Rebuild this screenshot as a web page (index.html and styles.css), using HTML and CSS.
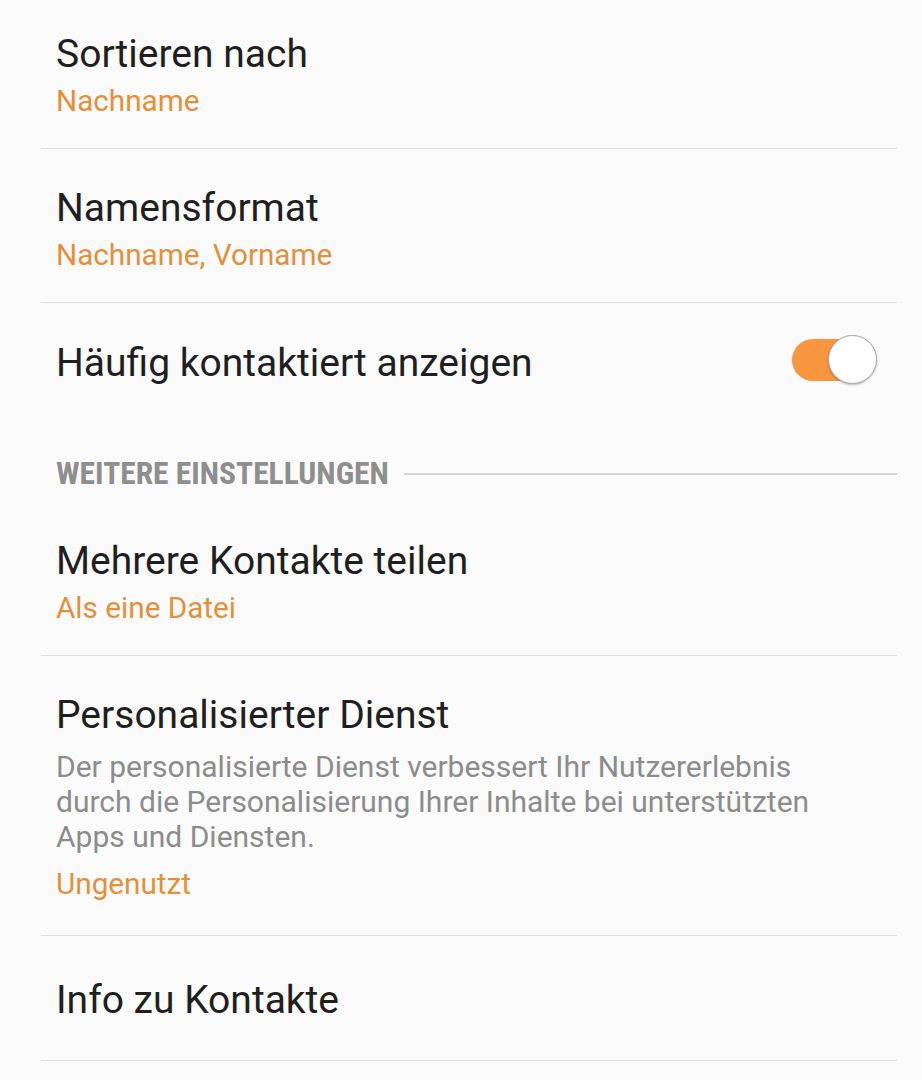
FILE: index.html
```html
<html>

<head>
  <link rel="stylesheet" href="styles.css">
</head>

<body>
  <div class="list">
    <div class="item">
      <div class="title">Sortieren nach</div>
      <div class="value">Nachname</div>
    </div>

    <div class="item">
      <div class="title">Namensformat</div>
      <div class="value">Nachname, Vorname</div>
    </div>

    <!-- switch row, no divider below -->
    <div class="item item-switch">
      <div class="title">Häufig kontaktiert anzeigen</div>
      <div class="switch on"><span class="knob"></span></div>
    </div>

    <div class="section">
      <span class="section-label">WEITERE EINSTELLUNGEN</span>
      <span class="section-line"></span>
    </div>

    <div class="item">
      <div class="title">Mehrere Kontakte teilen</div>
      <div class="value">Als eine Datei</div>
    </div>

    <div class="item item-long">
      <div class="title">Personalisierter Dienst</div>
      <div class="desc">Der personalisierte Dienst verbessert Ihr Nutzererlebnis durch die Personalisierung Ihrer Inhalte bei unterstützten Apps und Diensten.</div>
      <div class="value value-after-desc">Ungenutzt</div>
    </div>

    <div class="item item-single">
      <div class="title">Info zu Kontakte</div>
    </div>
  </div>
</body>

</html>
```

FILE: styles.css
```css
body {
  margin: 0;
  background-color: #fafafa;
  font-family: Roboto, "Noto Sans", sans-serif;
  overflow: hidden;
}

.list {
  margin: -5px 25px 0 41px;
}

.item {
  padding: 36px 15px 29px 15px;
  border-bottom: 1px solid #dedede;
}

.title {
  font-size: 39px;
  line-height: 46px;
  color: #1f1f1f;
}

.value {
  margin-top: 6px;
  font-size: 29.7px;
  line-height: 36px;
  color: #e0913e;
}

.desc {
  margin-top: 11px;
  max-width: 780px;
  font-size: 30px;
  line-height: 35px;
  color: #8c8c8c;
}

.value-after-desc {
  margin-top: 12px;
}

.item-long {
  padding-bottom: 33px;
}

.item-single {
  padding-top: 41px;
  padding-bottom: 37px;
}

.item-switch {
  display: flex;
  align-items: center;
  justify-content: space-between;
  padding-bottom: 36px;
  padding-right: 29px;
  border-bottom: none;
}

/* toggle */
.switch {
  position: relative;
  width: 76px;
  height: 42px;
  margin-bottom: 6px;
  border-radius: 21px;
  background-color: #ccc;
}

.switch.on {
  background-color: #f7963f;
}

.knob {
  position: absolute;
  top: -4px;
  right: -9px;
  width: 47px;
  height: 47px;
  border-radius: 50%;
  background-color: #fff;
  border: 1px solid #a5a5a5;
  box-shadow: 0 1px 2px rgba(0, 0, 0, 0.25);
}

.section {
  display: flex;
  align-items: center;
  padding: 32px 0 10px 15px;
}

.section-label {
  font-family: "Roboto Condensed", "Liberation Sans Narrow", "DejaVu Sans Condensed", Roboto, sans-serif;
  font-weight: bold;
  font-size: 31.5px;
  line-height: 37px;
  color: #8e8e8e;
}

.section-line {
  flex: 1;
  height: 2px;
  margin-left: 15px;
  background-color: #d6d6d6;
}
```
